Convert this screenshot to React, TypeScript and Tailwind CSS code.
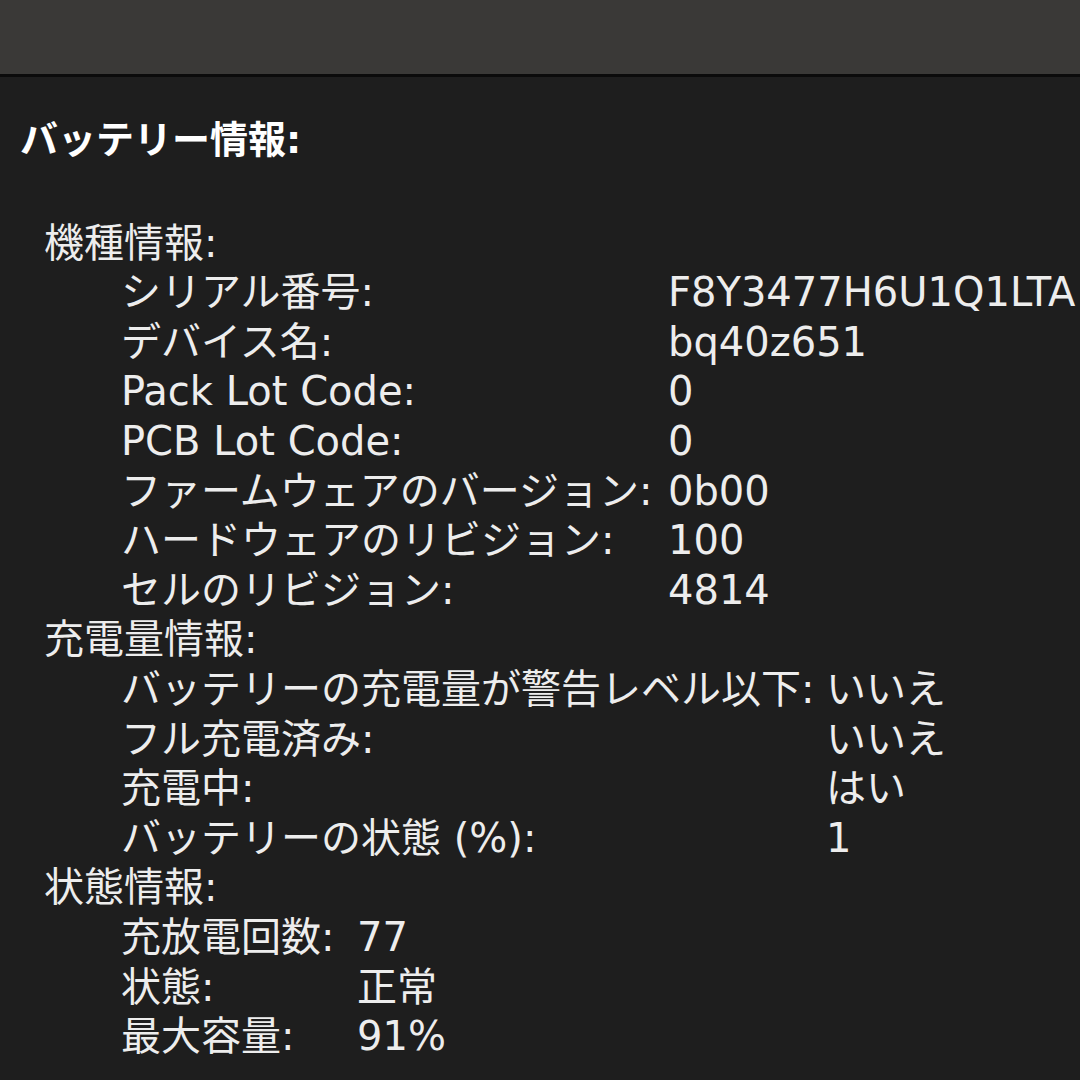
import React from 'react'

type Row = { label: string; value: string }

const modelInfo: Row[] = [
  { label: 'シリアル番号:', value: 'F8Y3477H6U1Q1LTA' },
  { label: 'デバイス名:', value: 'bq40z651' },
  { label: 'Pack Lot Code:', value: '0' },
  { label: 'PCB Lot Code:', value: '0' },
  { label: 'ファームウェアのバージョン:', value: '0b00' },
  { label: 'ハードウェアのリビジョン:', value: '100' },
  { label: 'セルのリビジョン:', value: '4814' },
]

const chargeInfo: Row[] = [
  { label: 'バッテリーの充電量が警告レベル以下:', value: 'いいえ' },
  { label: 'フル充電済み:', value: 'いいえ' },
  { label: '充電中:', value: 'はい' },
  { label: 'バッテリーの状態 (%):', value: '1' },
]

const healthInfo: Row[] = [
  { label: '充放電回数:', value: '77' },
  { label: '状態:', value: '正常' },
  { label: '最大容量:', value: '91%' },
]

function Section({ title, rows, labelWidth }: { title: string; rows: Row[]; labelWidth: string }) {
  return (
    <div className="pl-[24px]">
      <div>{title}</div>
      <div className="pl-[77px]">
        {rows.map((r) => (
          <div key={r.label} className="flex whitespace-nowrap">
            <div className={labelWidth + ' shrink-0'}>{r.label}</div>
            <div>{r.value}</div>
          </div>
        ))}
      </div>
    </div>
  )
}

export default function App() {
  return (
    <div
      className="w-[1080px] h-[1080px] overflow-hidden bg-[#1e1e1e] text-[#ededed]"
      style={{ fontFamily: '"DejaVu Sans", "Noto Sans CJK JP", sans-serif' }}
    >
      <div className="h-[77px] bg-[#3a3937] border-b-[3px] border-[#0b0b0b]" />

      <div className="pl-[20px] pt-[39px] text-[40px] leading-[49.6px]">
        <div className="text-[38px] font-bold mb-[53px] text-white">バッテリー情報:</div>

        <Section title="機種情報:" rows={modelInfo} labelWidth="w-[547px]" />
        <Section title="充電量情報:" rows={chargeInfo} labelWidth="w-[705px]" />
        <Section title="状態情報:" rows={healthInfo} labelWidth="w-[236px]" />
      </div>
    </div>
  )
}
